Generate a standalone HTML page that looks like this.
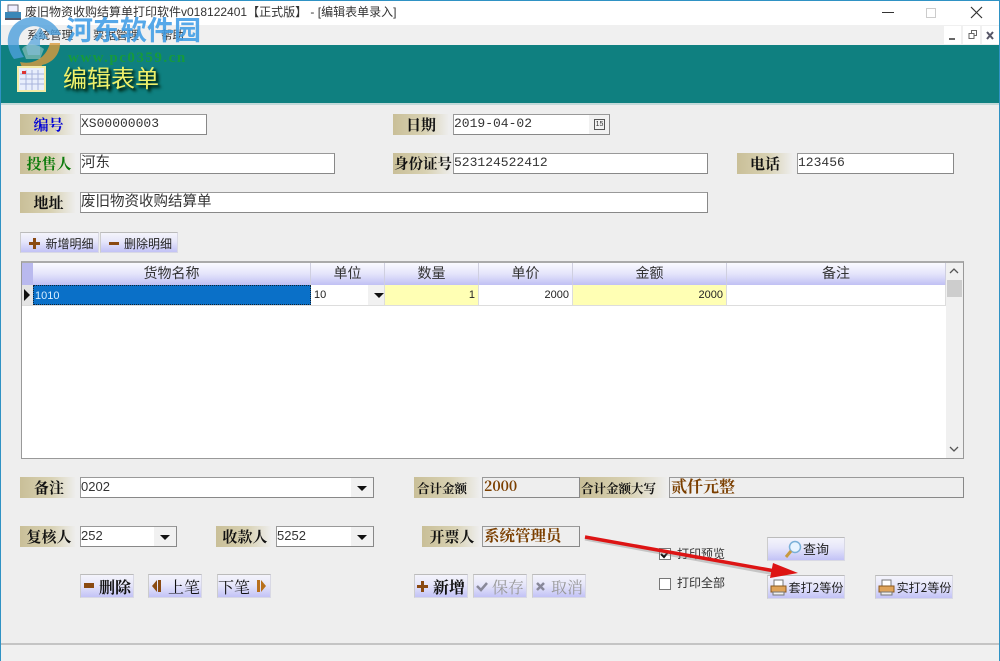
<!DOCTYPE html>
<html lang="zh"><head><meta charset="utf-8"><title>废旧物资收购结算单打印软件</title>
<style>
*{box-sizing:border-box}
html,body{margin:0;padding:0;width:1000px;height:661px;overflow:hidden;background:#eee}
body{position:relative;font-family:"Liberation Sans","Noto Sans CJK SC",sans-serif;font-size:12px;color:#111}
.a{position:absolute;white-space:nowrap}
.lb{position:absolute;height:21px;background:linear-gradient(90deg,#c9bf98,#d8d1b2 55%,#eeeeee);font:bold 15px/22px "Noto Serif CJK SC","Liberation Serif",serif;text-align:center;color:#111;white-space:nowrap}
.in{position:absolute;height:21px;background:#fff;border:1px solid #999;border-bottom-color:#888;border-right-color:#888;font:13px/17px "Liberation Mono","Noto Sans CJK SC",monospace;padding-left:0;color:#333;white-space:nowrap;overflow:hidden}
.s{font-family:"Noto Sans CJK SC","Liberation Sans",sans-serif;font-size:14.5px;line-height:16px}
.ro{background:#eee;color:#7b3f00;font-family:"Noto Serif CJK SC",serif;font-weight:bold;font-size:15.500px;line-height:16px;padding-left:1px}
.dd{position:absolute;right:0;top:0;bottom:0;width:22px;background:#f1f1f1}
.dd:after{content:"";position:absolute;left:6px;top:8px;border:5px solid transparent;border-top:5px solid #111;border-bottom:0}
.btn{position:absolute;border:1px solid #d8d8e4;border-top-color:#bbb;border-left-color:#ccc;background:linear-gradient(#f4f4fb,#e6e6fa 45%,#c2c2f6);text-align:center;white-space:nowrap;font:bold 16px/23px "Noto Serif CJK SC",serif;color:#111}
.sm{font:12px/21px "Noto Sans CJK SC",sans-serif;color:#222}
.dis{color:#999}
.h{position:absolute;top:263px;height:22px;background:linear-gradient(#fafaff,#e4e4fb 50%,#c0c0f4);border-right:1px solid #cfcfe0;font:14px/21px "Noto Sans CJK SC",sans-serif;text-align:center;color:#333}
.c{position:absolute;top:285px;height:20px;border-right:1px solid #ddd;font:11px/20px "Liberation Sans",sans-serif;text-align:right;padding-right:3px;color:#222}
</style></head><body>

<div class="a" style="left:0;top:0;width:1000px;height:25px;background:#fff"></div>
<div class="a" style="left:0;top:25px;width:1000px;height:20px;background:#f0f0f0"></div>
<div class="a" style="left:1px;top:45px;width:998px;height:58px;background:#0f8080"></div>
<div class="a" style="left:0;top:103px;width:1000px;height:2px;background:#c3d9d9"></div>
<div class="a" style="left:0;top:0;width:1px;height:661px;background:#2f92c4"></div>
<div class="a" style="left:999px;top:0;width:1px;height:661px;background:#2f92c4"></div>
<div class="a" style="left:0;top:0;width:1000px;height:1px;background:#2f92c4"></div>

<svg class="a" style="left:4px;top:4px" width="18" height="18" viewBox="0 0 18 18"><rect x="4" y="1" width="10" height="7" fill="#eef" stroke="#667"/><rect x="1" y="8" width="16" height="6" fill="#3a87b8"/><rect x="1" y="14" width="16" height="2" fill="#556"/></svg>
<div class="a" style="left:25px;top:4px;font:12px/17px 'Liberation Sans','Noto Sans CJK SC',sans-serif;color:#333">废旧物资收购结算单打印软件v018122401【正式版】 - [编辑表单录入]</div>
<div class="a" style="left:27px;top:26px;font:11.500px/18px 'Noto Sans CJK SC',sans-serif;color:#333">系统管理</div>
<div class="a" style="left:93px;top:26px;font:11.500px/18px 'Noto Sans CJK SC',sans-serif;color:#333">票据管理</div>
<div class="a" style="left:161px;top:26px;font:11.500px/18px 'Noto Sans CJK SC',sans-serif;color:#333">帮助</div>

<svg class="a" style="left:880px;top:4px" width="110" height="40" viewBox="0 0 110 40"><path d="M2 8.500H14" stroke="#333"/><rect x="46.500" y="4.500" width="9" height="9" fill="none" stroke="#ccc"/><path d="M91 3L102 14M102 3L91 14" stroke="#333" stroke-width="1.200" fill="none"/></svg>
<div class="a" style="left:944px;top:26px;width:17px;height:18px;background:#fff"></div>
<div class="a" style="left:963px;top:26px;width:17px;height:18px;background:#fff"></div>
<div class="a" style="left:982px;top:26px;width:17px;height:18px;background:#fff"></div>
<svg class="a" style="left:944px;top:26px" width="56" height="18" viewBox="0 0 56 18"><path d="M5 13H11" stroke="#666" stroke-width="2"/><path d="M25 7.500h5v5h-5zM27.500 7V4.500h5v5H30" fill="none" stroke="#666"/><path d="M43 6L49 13M49 6L43 13" stroke="#556" stroke-width="2"/></svg>

<svg class="a" style="left:4px;top:13px" width="60" height="62" viewBox="0 0 60 62"><path d="M10 46C-2 30 4 10 22 5C38 1 52 9 57 22L46 22C40 13 28 10 20 17C12 24 14 36 20 44Z" fill="#4c9fdc" opacity=".8"/><path d="M56 30C56 42 48 50 38 52L36 60H20L16 49C28 52 42 46 46 30Z" fill="#d99a3c" opacity=".8"/><path d="M22 34L36 14L44 26L36 26L36 42L24 42Z" fill="#4c9fdc" opacity=".7"/><path d="M18 36C22 30 32 30 40 36L36 46H22Z" fill="#bcd9d0" opacity=".5"/></svg>
<div class="a" style="left:66px;top:12px;font:bold 27px/34px 'Noto Sans CJK SC',sans-serif;color:#3f9de6;opacity:.88">河东软件园</div>
<div class="a" style="left:68px;top:49px;font:bold 15px/18px 'Liberation Serif',serif;color:#169a3c;letter-spacing:1.500px">www.pc0359.cn</div>

<svg class="a" style="left:17px;top:66px" width="30" height="26" viewBox="0 0 30 26"><rect x="1" y="1" width="27" height="24" fill="#e8eefc" stroke="#f3eba6" stroke-width="2"/><path d="M3 8H27M3 13H27M3 18H27M9 4V24M15 4V24M21 4V24" stroke="#a8b4dc"/><rect x="5" y="5" width="4" height="3" fill="#d33"/></svg>
<div class="a" style="left:63px;top:61px;font:24px/32px 'Noto Sans CJK SC',sans-serif;color:#eef06a;text-shadow:2px 2px 2px #012a1a,3px 3px 3px #02301f">编辑表单</div>

<div class="lb" style="left:20px;top:114px;width:56px;color:#0000d8;padding-left:1px">编号</div>
<div class="in" style="left:80px;top:114px;width:127px">XS00000003</div>
<div class="lb" style="left:393px;top:114px;width:56px">日期</div>
<div class="in" style="left:453px;top:114px;width:157px">2019-04-02<div class="a" style="right:0;top:0;bottom:0;width:20px;background:#f1f1f1"></div><div class="a" style="right:4px;top:4px;width:11px;height:11px;border:1px solid #555;font:7px/9px 'Liberation Sans',sans-serif;text-align:center">15</div></div>

<div class="lb" style="left:20px;top:153px;width:56px;color:#0a7a0a;padding-left:2px">投售人</div>
<div class="in s" style="left:80px;top:153px;width:255px">河东</div>
<div class="lb" style="left:393px;top:153px;width:60px;font-size:14.500px">身份证号</div>
<div class="in" style="left:453px;top:153px;width:255px">523124522412</div>
<div class="lb" style="left:737px;top:153px;width:56px">电话</div>
<div class="in" style="left:797px;top:153px;width:157px">123456</div>

<div class="lb" style="left:20px;top:192px;width:56px;padding-left:1px">地址</div>
<div class="in s" style="left:80px;top:192px;width:628px">废旧物资收购结算单</div>

<div class="btn sm" style="left:20px;top:232px;width:79px;height:21px">
<svg style="position:absolute;left:8px;top:5px" width="11" height="11"><path d="M4 0h3v4h4v3H7v4H4V7H0V4h4z" fill="#8a4a12"/></svg><span style="margin-left:20px">新增明细</span></div>
<div class="btn sm" style="left:100px;top:232px;width:78px;height:21px">
<svg style="position:absolute;left:8px;top:5px" width="11" height="11"><path d="M0 4h10v3H0z" fill="#8a4a12"/></svg><span style="margin-left:18px">删除明细</span></div>

<div class="a" style="left:21px;top:261px;width:943px;height:198px;background:#fff;border:1px solid #999;border-top:2px solid #aaa"></div>
<div class="a" style="left:22px;top:263px;width:11px;height:22px;background:#b9b9ee"></div>
<div class="h" style="left:33px;width:278px">货物名称</div>
<div class="h" style="left:311px;width:74px">单位</div>
<div class="h" style="left:385px;width:94px">数量</div>
<div class="h" style="left:479px;width:94px">单价</div>
<div class="h" style="left:573px;width:154px">金额</div>
<div class="h" style="left:727px;width:219px">备注</div>

<div class="a" style="left:22px;top:285px;width:11px;height:20px;background:#e4e4e4"></div>
<svg class="a" style="left:24px;top:289px" width="7" height="12"><path d="M0 0L6 6L0 12Z" fill="#111"/></svg>
<div class="c" style="left:33px;width:278px;background:#0a70c8;color:#d8eeff;text-align:left;padding-left:1px;border:1px dotted #123">1010</div>
<div class="c" style="left:311px;width:74px;background:#fff;text-align:left;padding-left:3px">10<div class="dd" style="width:16px"></div></div>
<div class="c" style="left:385px;width:94px;background:#ffffb4">1</div>
<div class="c" style="left:479px;width:94px;background:#fff">2000</div>
<div class="c" style="left:573px;width:154px;background:#ffffb4">2000</div>
<div class="c" style="left:727px;width:219px;background:#fff"></div>
<div class="a" style="left:22px;top:305px;width:924px;height:1px;background:#ddd"></div>
<div class="a" style="left:946px;top:263px;width:17px;height:195px;background:#f0f0f0"></div>
<div class="a" style="left:947px;top:280px;width:15px;height:17px;background:#cdcdcd"></div>
<svg class="a" style="left:949px;top:266px" width="10" height="190"><path d="M1 7L5 3L9 7M1 181L5 185L9 181" fill="none" stroke="#555" stroke-width="1.300"/></svg>

<div class="lb" style="left:20px;top:477px;width:56px;padding-left:2px">备注</div>
<div class="in" style="left:80px;top:477px;width:294px;font-family:'Liberation Sans',sans-serif">0202<div class="dd"></div></div>
<div class="lb" style="left:414px;top:477px;width:66px;font-size:12.500px;text-align:left;padding-left:3px">合计金额</div>
<div class="in ro" style="left:482px;top:477px;width:98px;font-size:14px">2000</div>
<div class="lb" style="left:580px;top:477px;width:88px;font-size:12.500px;text-align:left;padding-left:1px">合计金额大写</div>
<div class="in ro" style="left:669px;top:477px;width:295px;font-size:16px">贰仟元整</div>

<div class="lb" style="left:20px;top:526px;width:56px;padding-left:2px">复核人</div>
<div class="in" style="left:80px;top:526px;width:97px;font-family:'Liberation Sans',sans-serif">252<div class="dd"></div></div>
<div class="lb" style="left:216px;top:526px;width:56px;padding-left:2px">收款人</div>
<div class="in" style="left:276px;top:526px;width:98px;font-family:'Liberation Sans',sans-serif">5252<div class="dd"></div></div>
<div class="lb" style="left:422px;top:526px;width:58px;padding-left:2px">开票人</div>
<div class="in ro" style="left:482px;top:526px;width:98px">系统管理员</div>

<div class="btn" style="left:80px;top:574px;width:54px;height:24px;padding-left:16px"><svg style="position:absolute;left:3px;top:8px" width="11" height="6"><path d="M0 0h10v5H0z" fill="#8a4a12"/></svg>删除</div>
<div class="btn" style="left:148px;top:574px;width:54px;height:24px;font-weight:normal;padding-left:18px"><svg style="position:absolute;left:3px;top:5px" width="10" height="13"><path d="M5 0V12L0 6ZM6 0h3v12H6z" fill="#8a4a12"/></svg>上笔</div>
<div class="btn" style="left:217px;top:574px;width:54px;height:24px;font-weight:normal;padding-right:21px"><svg style="position:absolute;right:3px;top:5px" width="10" height="13"><path d="M0 0h3v12H0zM4 0L9 6L4 12Z" fill="#b8701e"/></svg>下笔</div>

<div class="btn" style="left:414px;top:574px;width:54px;height:24px;padding-left:16px"><svg style="position:absolute;left:2px;top:6px" width="11" height="11"><path d="M4 0h3v4h4v3H7v4H4V7H0V4h4z" fill="#8a4a12"/></svg>新增</div>
<div class="btn dis" style="left:473px;top:574px;width:54px;height:24px;font-weight:normal;padding-left:16px"><svg style="position:absolute;left:2px;top:6px" width="12" height="11"><path d="M1 5L5 9L11 2" fill="none" stroke="#889" stroke-width="2.500"/></svg>保存</div>
<div class="btn dis" style="left:532px;top:574px;width:54px;height:24px;font-weight:normal;padding-left:16px"><svg style="position:absolute;left:3px;top:7px" width="10" height="10"><path d="M1 1L8 8M8 1L1 8" stroke="#889" stroke-width="2.500"/></svg>取消</div>

<div class="a" style="left:659px;top:548px;width:12px;height:12px;background:#fff;border:1px solid #777"></div>
<svg class="a" style="left:660px;top:549px" width="10" height="10"><path d="M1 5L4 8L9 2" fill="none" stroke="#111" stroke-width="2"/></svg>
<div class="a" style="left:677px;top:545px;font:12px/18px 'Noto Sans CJK SC',sans-serif;color:#333">打印预览</div>
<div class="a" style="left:659px;top:578px;width:12px;height:12px;background:#fff;border:1px solid #777"></div>
<div class="a" style="left:677px;top:574px;font:12px/18px 'Noto Sans CJK SC',sans-serif;color:#333">打印全部</div>

<div class="btn sm" style="left:767px;top:537px;width:78px;height:24px;font-size:13px;line-height:22px;padding-left:20px"><svg style="position:absolute;left:16px;top:2px" width="18" height="19" viewBox="0 0 18 19"><circle cx="11" cy="7" r="5.500" fill="#e8f4ff" stroke="#7ab0d8" stroke-width="1.500"/><path d="M7 11L2 17" stroke="#c89a40" stroke-width="3"/></svg>查询</div>
<div class="btn sm" style="left:767px;top:575px;width:78px;height:24px;font-size:12px;line-height:24px;padding-left:20px"><svg style="position:absolute;left:2px;top:3px" width="17" height="17" viewBox="0 0 17 17"><rect x="4" y="1" width="9" height="6" fill="#fff" stroke="#777"/><rect x="1" y="7" width="15" height="6" fill="#e0a45a" stroke="#8a5a20"/><rect x="3" y="13" width="11" height="3" fill="#eee" stroke="#777"/></svg>套打2等份</div>
<div class="btn sm" style="left:875px;top:575px;width:78px;height:24px;font-size:12px;line-height:24px;padding-left:20px"><svg style="position:absolute;left:2px;top:3px" width="17" height="17" viewBox="0 0 17 17"><rect x="4" y="1" width="9" height="6" fill="#fff" stroke="#777"/><rect x="1" y="7" width="15" height="6" fill="#e0a45a" stroke="#8a5a20"/><rect x="3" y="13" width="11" height="3" fill="#eee" stroke="#777"/></svg>实打2等份</div>

<svg class="a" style="left:575px;top:528px" width="225" height="60" viewBox="0 0 225 60"><path d="M10 11L200 46" stroke="#777" stroke-width="3" opacity=".35" fill="none"/><path d="M10 9L200 43" stroke="#dd1414" stroke-width="3.500" fill="none"/><path d="M198 35L223 45L195 50Z" fill="#dd1414"/></svg>

<div class="a" style="left:1px;top:643px;width:998px;height:2px;background:#c4c4c4"></div>
<div class="a" style="left:1px;top:645px;width:998px;height:16px;background:#f0f0f0"></div>
</body></html>
